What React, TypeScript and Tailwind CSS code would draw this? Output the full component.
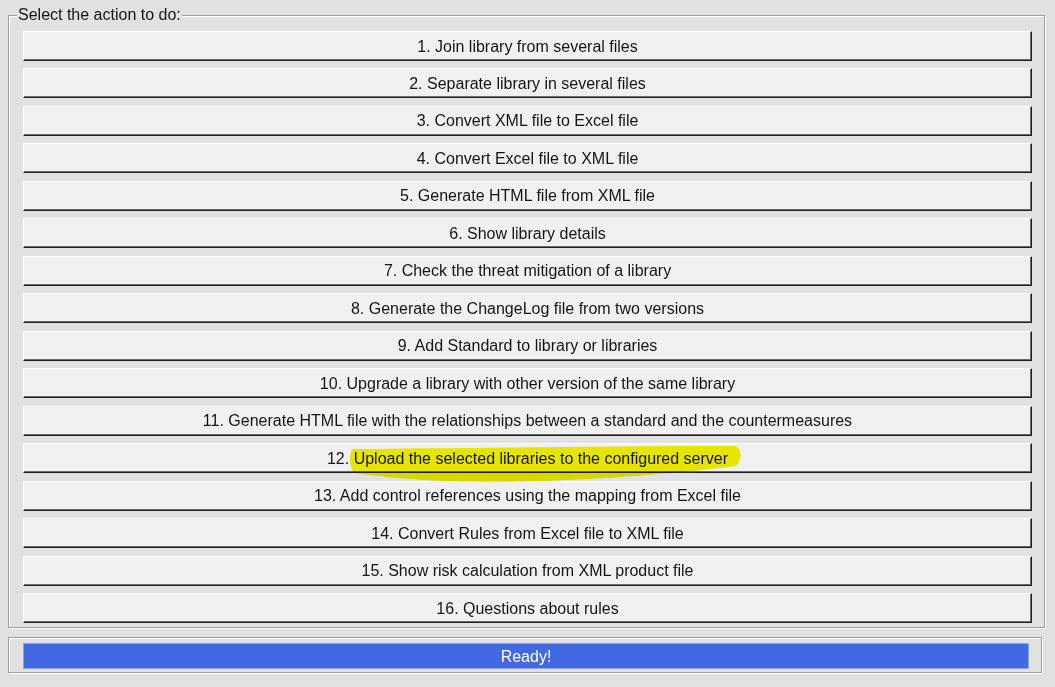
import React from 'react';

const actions = [
  '1. Join library from several files',
  '2. Separate library in several files',
  '3. Convert XML file to Excel file',
  '4. Convert Excel file to XML file',
  '5. Generate HTML file from XML file',
  '6. Show library details',
  '7. Check the threat mitigation of a library',
  '8. Generate the ChangeLog file from two versions',
  '9. Add Standard to library or libraries',
  '10. Upgrade a library with other version of the same library',
  '11. Generate HTML file with the relationships between a standard and the countermeasures',
  '12. Upload the selected libraries to the configured server',
  '13. Add control references using the mapping from Excel file',
  '14. Convert Rules from Excel file to XML file',
  '15. Show risk calculation from XML product file',
  '16. Questions about rules',
];

const ActionButton = ({ label }: { label: string }) => (
  <button
    type="button"
    className="h-[30px] w-full shrink-0 bg-[#f0f0f0] border-t border-l border-t-white border-l-white border-b border-r border-b-[#202020] border-r-[#202020] shadow-[inset_-1px_-1px_0_#6a6a6a] text-[16px] leading-none text-[#151515] flex items-center justify-center pt-[1px]"
  >
    {label}
  </button>
);

const App = () => {
  return (
    <div
      className="relative w-[1055px] h-[687px] bg-[#e1e1e1] overflow-hidden"
      style={{ fontFamily: '"Liberation Sans", Arial, sans-serif' }}
    >
      <div className="pl-[8px] pt-[6px]">
        <fieldset className="w-[1037px] h-[622px] border border-[#a0a0a0] shadow-[1px_1px_0_#ffffff,inset_1px_1px_0_#ffffff] pl-[14px] pr-[12px] pt-[7px]">
          <legend className="-ml-[6px] px-[1px] text-[16px] leading-[18px] text-[#151515] bg-[#e1e1e1]">
            Select the action to do:
          </legend>
          <div className="flex flex-col gap-[7.47px]">
            {actions.map((a) => (
              <ActionButton key={a} label={a} />
            ))}
          </div>
        </fieldset>
      </div>

      <div className="ml-[8px] mt-[9px] w-[1034px] h-[36px] border border-[#a0a0a0] shadow-[1px_1px_0_#ffffff,inset_1px_1px_0_#ffffff] pl-[14px] pr-[12px] pt-[5px]">
        <div className="h-[26px] bg-[#4169e1] border border-[#8ea4ee] flex items-center justify-center text-white text-[16px] leading-none pt-[2px]">
          Ready!
        </div>
      </div>

      <svg
        className="absolute left-[348px] top-[444px] mix-blend-multiply pointer-events-none"
        width="396"
        height="42"
        viewBox="0 0 396 42"
      >
        <path
          d="M 4 5 C 120 4, 260 2, 386 2 C 394 3, 395 16, 388 22 C 340 28, 260 36, 160 38 C 100 39, 40 34, 6 29 C 1 22, 1 10, 4 5 Z"
          fill="#f4f400"
        />
      </svg>
    </div>
  );
};

export default App;
